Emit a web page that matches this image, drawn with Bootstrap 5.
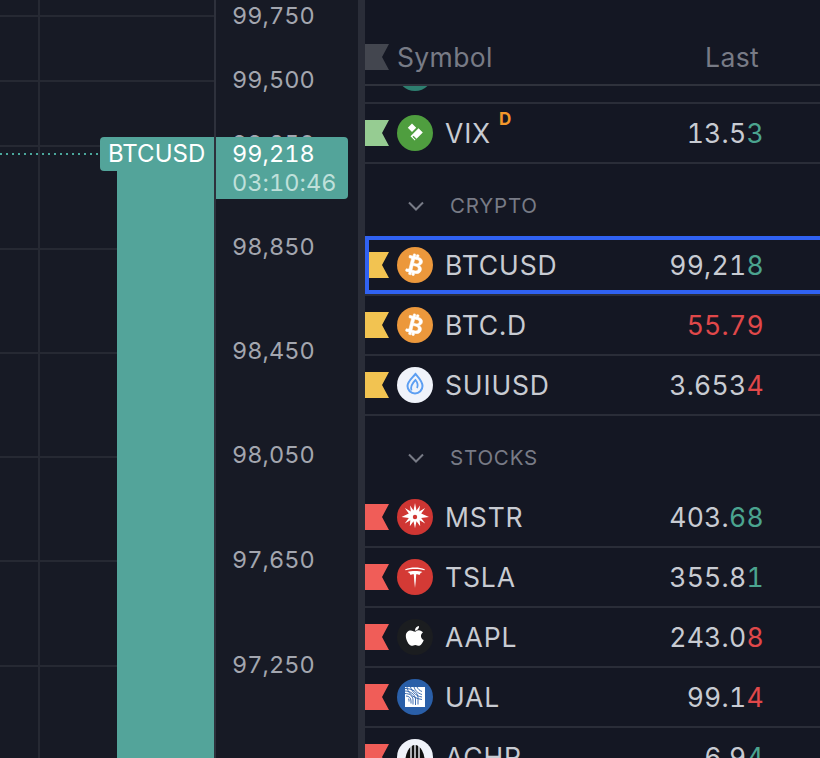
<!DOCTYPE html>
<html lang="en">
<head>
  <meta charset="UTF-8" />
  <title>Watchlist</title>
  <meta name="viewport" content="width=device-width, initial-scale=1" />
  <link href="https://cdn.jsdelivr.net/npm/bootstrap@5.3.0/dist/css/bootstrap.min.css" rel="stylesheet" />
  <style>
    html, body { height: 100%; }
    body { background: #161923; font-family: Inter, "Liberation Sans", sans-serif; overflow: hidden; font-variant-numeric: tabular-nums; }
    .screen { width: 820px; height: 758px; }

    .chart-pane { width: 214px; position: relative; background: #171a25; }
    .grid-lines { position: absolute; inset: 0; width: 214px; height: 758px; }
    .candle { position: absolute; left: 117px; right: 0; top: 171px; bottom: 0; background: #53a49a; }
    .last-line { position: absolute; left: 0; width: 100px; top: 153px; height: 2px; background: repeating-linear-gradient(90deg, #4ba79c 0 2px, transparent 2px 6px); }
    .name-tag { position: absolute; left: 100px; right: 0; top: 137px; height: 34px; background: #53a49a; color: #fff; font-size: 24px; line-height: 34px; padding-left: 8px; border-radius: 4px 0 0 4px; }

    .axis-pane { width: 144px; position: relative; background: #171a25; border-left: 2px solid #2e313c; }
    .tick { position: absolute; left: 16px; color: #a3a6af; font-size: 23.5px; line-height: 30px; letter-spacing: .05px; transform: translateY(-50%); }
    .price-tag { position: absolute; left: 0; top: 137px; width: 132px; height: 62px; background: #53a49a; border-radius: 0 4px 4px 0; padding: 2px 0 0 16px; font-size: 23.5px; line-height: 29px; letter-spacing: .05px; color: #fff; }
    .price-tag div + div { color: #bfe0da; line-height: 30px; }

    .split { width: 7px; background: #2a2d38; }

    .watch { width: 455px; background: #141723; overflow: hidden; }
    .watch-head { height: 86px; border-bottom: 2px solid #2f323c; padding-top: 30px; color: #787b86; font-size: 26.5px; letter-spacing: .35px; }
    .watch-head span { padding-top: 2px; }
    .head-last { margin-left: auto; margin-right: 61px; }
    .flag { width: 24px; height: 26px; flex: none; clip-path: polygon(0 0, 100% 0, 71% 50%, 100% 100%, 0 100%); }
    .flag-grey { background: #43464f; }
    .flag-green { background: #96cc92; }
    .flag-yellow { background: #f2c351; }
    .flag-red { background: #f05d58; }
    .stub { height: 18px; border-bottom: 2px solid #2a2d38; overflow: hidden; position: relative; }
    .stub-dot { position: absolute; left: 32px; top: -31px; width: 36px; height: 36px; border-radius: 50%; background: #2e7f70; }

    .row-item { height: 60px; border-bottom: 2px solid #2a2d38; color: #c8cbd2; font-size: 26.5px; letter-spacing: .3px; }
    .active-box { height: 58px; border: 4px solid #3062f2; border-right: 0; }
    .active-box .flag { width: 20px; clip-path: polygon(0 0, 100% 0, 65% 50%, 100% 100%, 0 100%); }
    .coin { width: 36px; height: 36px; border-radius: 50%; flex: none; margin-left: 8px; display: flex; align-items: center; justify-content: center; overflow: hidden; }
    .coin svg { display: block; }
    .sym { margin-left: 12px; position: relative; padding-top: 2px; letter-spacing: .85px; }
    .sup-d { position: absolute; left: calc(100% + 8px); top: -5px; color: #f3982b; font-size: 17px; font-weight: 700; }
    .quote { margin-left: auto; margin-right: 56px; padding-top: 2px; }
    .up { color: #4ba48f; }
    .down { color: #e0484a; }

    .section { height: 72px; padding-left: 42px; padding-top: 12px; color: #787b86; font-size: 20.5px; letter-spacing: .8px; }
    .section svg { margin-right: 25px; }
  </style>
</head>
<body>
<div class="screen d-flex">

  <div class="chart-pane">
    <svg class="grid-lines" viewBox="0 0 214 758">
      <g stroke="#262933" stroke-width="2">
        <line x1="0" y1="16" x2="214" y2="16" />
        <line x1="0" y1="81" x2="214" y2="81" />
        <line x1="0" y1="146" x2="214" y2="146" />
        <line x1="0" y1="249" x2="214" y2="249" />
        <line x1="0" y1="353" x2="214" y2="353" />
        <line x1="0" y1="457" x2="214" y2="457" />
        <line x1="0" y1="561" x2="214" y2="561" />
        <line x1="0" y1="666" x2="214" y2="666" />
        <line x1="39" y1="0" x2="39" y2="758" />
      </g>
    </svg>
    <div class="candle"></div>
    <div class="last-line"></div>
    <div class="name-tag">BTCUSD</div>
  </div>

  <div class="axis-pane">
    <div class="tick" style="top: 16px">99,750</div>
    <div class="tick" style="top: 80px">99,500</div>
    <div class="tick" style="top: 144px">99,250</div>
    <div class="tick" style="top: 247px">98,850</div>
    <div class="tick" style="top: 351px">98,450</div>
    <div class="tick" style="top: 455px">98,050</div>
    <div class="tick" style="top: 560px">97,650</div>
    <div class="tick" style="top: 665px">97,250</div>
    <div class="price-tag">
      <div>99,218</div>
      <div>03:10:46</div>
    </div>
  </div>

  <div class="split"></div>

  <div class="watch">
    <div class="watch-head d-flex align-items-center">
      <div class="flag flag-grey"></div>
      <span class="ms-2">Symbol</span>
      <span class="head-last">Last</span>
    </div>
    <div class="stub"><div class="stub-dot"></div></div>

    <div class="row-item d-flex align-items-center">
      <div class="flag flag-green"></div>
      <div class="coin" style="background: #4f9e3f">
        <svg width="36" height="36" viewBox="0 0 36 36"><path fill="#fff" d="M15 8.500l4.200 4.200-4.200 4.200-4.200-4.200zM21.500 13.200l4.300 4.300-8 8-4.300-4.300z" /><path fill="#4f9e3f" d="M15.500 21.800l1-1 4 4-1 1z" /></svg>
      </div>
      <span class="sym">VIX<span class="sup-d">D</span></span>
      <span class="quote">13.5<span class="up">3</span></span>
    </div>

    <div class="section d-flex align-items-center">
      <svg width="18" height="10" viewBox="0 0 18 10"><path d="M2 1.500l7 7 7-7" fill="none" stroke="#787b86" stroke-width="2" /></svg>
      <span>CRYPTO</span>
    </div>

    <div class="row-item">
      <div class="active-box d-flex align-items-center">
        <div class="flag flag-yellow"></div>
        <div class="coin" style="background: #ec983c">
          <svg width="26" height="26" viewBox="0 0 16 16"><g transform="rotate(14 8 8)"><path fill="#fff" stroke="#fff" stroke-width=".35" d="M5.500 13v1.250c0 .138.112.25.25.25h1a.25.25 0 0 0 .25-.25V13h.5v1.250c0 .138.112.25.25.25h1a.25.25 0 0 0 .25-.25V13h.084c1.992 0 3.416-1.033 3.416-2.820 0-1.502-1.007-2.323-2.186-2.440v-.088c.970-.242 1.683-.974 1.683-2.190C11.997 3.930 10.847 3 9.092 3H9V1.750a.25.25 0 0 0-.25-.25h-1a.25.25 0 0 0-.25.25V3h-.573V1.750a.25.25 0 0 0-.25-.25H5.750a.25.25 0 0 0-.25.25V3l-1.998.011a.25.25 0 0 0-.25.250v.989c0 .137.110.250.248.250l.755-.005a.750.750 0 0 1 .745.750v5.505a.750.750 0 0 1-.750.750l-.748.011a.25.25 0 0 0-.25.250v1c0 .138.112.250.250.250L5.500 13zm1.427-8.513h1.719c.906 0 1.438.498 1.438 1.312 0 .871-.575 1.362-1.877 1.362h-1.280V4.487zm0 4.051h1.840c1.137 0 1.756.580 1.756 1.524 0 .953-.626 1.450-2.158 1.450H6.927V8.539z" /></g></svg>
        </div>
        <span class="sym">BTCUSD</span>
        <span class="quote">99,21<span class="up">8</span></span>
      </div>
    </div>

    <div class="row-item d-flex align-items-center">
      <div class="flag flag-yellow"></div>
      <div class="coin" style="background: #ec983c">
        <svg width="26" height="26" viewBox="0 0 16 16"><g transform="rotate(14 8 8)"><path fill="#fff" stroke="#fff" stroke-width=".35" d="M5.500 13v1.250c0 .138.112.25.25.25h1a.25.25 0 0 0 .25-.25V13h.5v1.250c0 .138.112.25.25.25h1a.25.25 0 0 0 .25-.25V13h.084c1.992 0 3.416-1.033 3.416-2.820 0-1.502-1.007-2.323-2.186-2.440v-.088c.970-.242 1.683-.974 1.683-2.190C11.997 3.930 10.847 3 9.092 3H9V1.750a.25.25 0 0 0-.25-.25h-1a.25.25 0 0 0-.25.25V3h-.573V1.750a.25.25 0 0 0-.25-.25H5.750a.25.25 0 0 0-.25.25V3l-1.998.011a.25.25 0 0 0-.25.250v.989c0 .137.110.250.248.250l.755-.005a.750.750 0 0 1 .745.750v5.505a.750.750 0 0 1-.750.750l-.748.011a.25.25 0 0 0-.25.250v1c0 .138.112.250.250.250L5.500 13zm1.427-8.513h1.719c.906 0 1.438.498 1.438 1.312 0 .871-.575 1.362-1.877 1.362h-1.280V4.487zm0 4.051h1.840c1.137 0 1.756.580 1.756 1.524 0 .953-.626 1.450-2.158 1.450H6.927V8.539z" /></g></svg>
      </div>
      <span class="sym">BTC.D</span>
      <span class="quote down">55.79</span>
    </div>

    <div class="row-item d-flex align-items-center">
      <div class="flag flag-yellow"></div>
      <div class="coin" style="background: #f0f3fa">
        <svg width="36" height="36" viewBox="0 0 36 36"><path fill="none" stroke="#5c9ef2" stroke-width="2" d="M18.500 7c3.300 3.800 7 7.500 7 12a7.500 7.500 0 0 1-15 0c0-4.500 4.700-8 8-12z" /><path fill="none" stroke="#5c9ef2" stroke-width="1.800" d="M14.500 23.500c-1.500-4 .5-7 4-10.500 2 2.500 3 5 1.500 8" /></svg>
      </div>
      <span class="sym">SUIUSD</span>
      <span class="quote">3.653<span class="down">4</span></span>
    </div>

    <div class="section d-flex align-items-center">
      <svg width="18" height="10" viewBox="0 0 18 10"><path d="M2 1.500l7 7 7-7" fill="none" stroke="#787b86" stroke-width="2" /></svg>
      <span>STOCKS</span>
    </div>

    <div class="row-item d-flex align-items-center">
      <div class="flag flag-red"></div>
      <div class="coin" style="background: #cf3633">
        <svg width="30" height="30" viewBox="0 0 30 30"><path fill="#fff" d="M15 1l1.500 7.500 3.500-5-.8 6 6-3.500-4 5.500 7.800 3.500-7.800 1 4 5.500-5.500-3.200 .5 6-3.700-5-1.500 7-1.500-7-3.700 5 .5-6-5.500 3.200 4-5.500-7.300-1 7.300-3.500-4-5.500 6 3.500-.8-6 3.500 5z" /><circle cx="15" cy="15" r="2.200" fill="#cf3633" /></svg>
      </div>
      <span class="sym">MSTR</span>
      <span class="quote">403.<span class="up">68</span></span>
    </div>

    <div class="row-item d-flex align-items-center">
      <div class="flag flag-red"></div>
      <div class="coin" style="background: #d43a35">
        <svg width="24" height="24" viewBox="0 0 24 24"><path fill="#fff" d="M12 23c-.6-4.500-1-9-1.200-13.800-1.400 0-2.600.2-3.300.8C7 8.500 6 7.400 4.500 7c2-.9 4.800-1 7.500-1s5.500.1 7.500 1c-1.500.4-2.500 1.500-3 3-.7-.6-1.900-.8-3.300-.8C13 14 12.600 18.500 12 23z" /><path fill="#fff" d="M2 4.500C5 3 8.500 2.500 12 2.500s7 .5 10 2l-.6.8C18.500 4.200 15 3.900 12 3.900S5.500 4.200 2.600 5.300z" /></svg>
      </div>
      <span class="sym">TSLA</span>
      <span class="quote">355.8<span class="up">1</span></span>
    </div>

    <div class="row-item d-flex align-items-center">
      <div class="flag flag-red"></div>
      <div class="coin" style="background: #1b1d20">
        <svg width="22" height="24" viewBox="0 0 20 22"><path fill="#fff" d="M10.300 6.200c1.300-1 2.700-1.500 4-1.200 1.300.2 2.300.8 3 1.800-2.700 1.800-2.300 5.600.7 6.900-.7 2-2.300 4.800-4 5.300-1.200.3-2.200-.7-3.700-.7s-2.500 1-3.700.7c-2.500-.7-5-5.500-5-9 0-3.300 2.200-5 4.500-5 1.700 0 2.900 1.200 4.200 1.200zM10 5.200C9.800 3.200 11.500 1.200 13.700 1c.2 2.300-1.700 4.300-3.700 4.200z" /></svg>
      </div>
      <span class="sym">AAPL</span>
      <span class="quote">243.0<span class="down">8</span></span>
    </div>

    <div class="row-item d-flex align-items-center">
      <div class="flag flag-red"></div>
      <div class="coin" style="background: #2a5fa8">
        <svg width="20" height="20" viewBox="0 0 20 20"><path fill="#fff" d="M0 0h20v20H0z" /><path fill="none" stroke="#2a5fa8" stroke-width=".9" d="M0 1.500c7 0 12.500 3 13 9v7M0 4c5 0 10 3 10.500 8v6M0 6.500c4 0 8 2 8 6.500v4.500M1 9c3 0 5 2 5 5v2.500M3 11.500c1 .5 1 1.500 1 3M2 0c.5 4 4 11 15 12.500M5.500 0c1 3 4 9 11.500 10M9 0c1 3 3 6 8 7.500M12 0c1 2 2.500 3.500 5 4.500" /></svg>
      </div>
      <span class="sym">UAL</span>
      <span class="quote">99.1<span class="down">4</span></span>
    </div>

    <div class="row-item d-flex align-items-center">
      <div class="flag flag-red"></div>
      <div class="coin" style="background: #f0f3fa">
        <svg width="36" height="36" viewBox="0 0 36 36"><ellipse cx="18" cy="25" rx="10" ry="19" fill="#111" /><path stroke="#f0f3fa" stroke-width="1.400" d="M14 6v30M18 6v30M22 6v30" /></svg>
      </div>
      <span class="sym">ACHR</span>
      <span class="quote">6.9<span class="up">4</span></span>
    </div>
  </div>
</div>
<script src="https://cdn.jsdelivr.net/npm/bootstrap@5.3.0/dist/js/bootstrap.bundle.min.js"></script>
</body>
</html>
